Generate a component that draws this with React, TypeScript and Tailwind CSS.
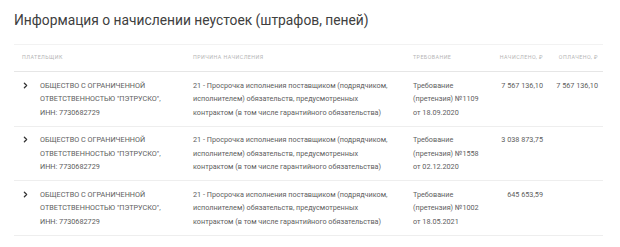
import { ChevronRight } from 'lucide-react';

const rows = [
  {
    payer: 'ОБЩЕСТВО С ОГРАНИЧЕННОЙ ОТВЕТСТВЕННОСТЬЮ "ПЭТРУСКО", ИНН: 7730682729',
    claim: ['Требование', '(претензия) №1109', 'от 18.09.2020'],
    accrued: '7 567 136,10',
    paid: '7 567 136,10',
  },
  {
    payer: 'ОБЩЕСТВО С ОГРАНИЧЕННОЙ ОТВЕТСТВЕННОСТЬЮ "ПЭТРУСКО", ИНН: 7730682729',
    claim: ['Требование', '(претензия) №1558', 'от 02.12.2020'],
    accrued: '3 038 873,75',
    paid: '',
  },
  {
    payer: 'ОБЩЕСТВО С ОГРАНИЧЕННОЙ ОТВЕТСТВЕННОСТЬЮ "ПЭТРУСКО", ИНН: 7730682729',
    claim: ['Требование', '(претензия) №1002', 'от 18.05.2021'],
    accrued: '645 653,59',
    paid: '',
  },
];

const reason =
  '21 - Просрочка исполнения поставщиком (подрядчиком, исполнителем) обязательств, предусмотренных контрактом (в том числе гарантийного обязательства)';

const cols = 'grid grid-cols-[26px_153px_220px_76px_54px_1fr]';

export default function App() {
  return (
    <div className="w-[620px] h-[247px] bg-white overflow-hidden font-['Roboto',sans-serif] px-[14px] pt-[10px]">
      <h1 className="text-[13.8px] leading-[20px] text-[#404040]">
        Информация о начислении неустоек (штрафов, пеней)
      </h1>

      <div className="mt-[14px] w-[589px] border-t border-[#f2f2f2]">
        {/* header */}
        <div className={`${cols} h-[27px] items-center border-b border-[#e6e6e6] text-[5.3px] tracking-[0.45px] uppercase text-[#b5b5b5]`}>
          <div className="col-span-2 pl-[8px]">Плательщик</div>
          <div>Причина начисления</div>
          <div>Требование</div>
          <div className="text-right">Начислено, ₽</div>
          <div className="text-right pr-[5px]">Оплачено, ₽</div>
        </div>

        {rows.map((r, i) => (
          <div
            key={i}
            className={`${cols} py-[6.5px] border-b border-[#eeeeee] text-[7.25px] leading-[13.5px] text-[#606060]`}
          >
            <div className="pl-[7px] pt-[2px]">
              <ChevronRight className="w-[9px] h-[9px] text-[#333]" strokeWidth={3.5} />
            </div>
            <div className="pr-[16px] uppercase">{r.payer}</div>
            <div className="pr-[14px]">{reason}</div>
            <div>
              {r.claim.map((c) => (
                <div key={c}>{c}</div>
              ))}
            </div>
            <div className="text-right">{r.accrued}</div>
            <div className="text-right pr-[5px]">{r.paid}</div>
          </div>
        ))}
      </div>
    </div>
  );
}
